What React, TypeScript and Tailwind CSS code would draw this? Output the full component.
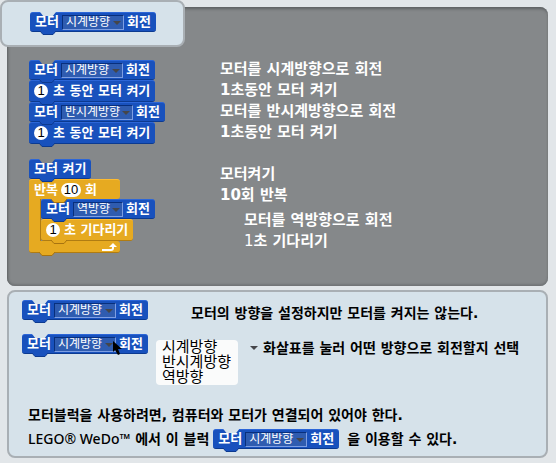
import type { ReactNode } from "react";

const DIRECTIONS = ["시계방향", "반시계방향", "역방향"];

const BLUE = "border-t border-b border-t-[#2c66d8] border-b-[#0c3a90] bg-[#1851bd]";
const ORANGE = "border-t border-b border-t-[#ffbb2e] border-b-[#b07c12] bg-[#e6aa21]";

function Notch({ className }: { className: string }) {
  return (
    <span
      className={`absolute -top-px left-[10px] h-[4px] w-[16px] [clip-path:polygon(0_0,100%_0,80%_100%,20%_100%)] ${className}`}
    />
  );
}

function Tab({ tone, className = "left-[10px]" }: { tone: "blue" | "orange"; className?: string }) {
  const fill = tone === "blue" ? "#1851bd" : "#e6aa21";
  const edge = tone === "blue" ? "#0c3a90" : "#a87410";
  return (
    <svg
      className={`absolute top-full z-10 -mt-px h-[5px] w-[16px] ${className}`}
      viewBox="0 0 16 5"
      aria-hidden="true"
    >
      <path d="M0 0H16V1L13 4.5H3L0 1Z" fill={fill} />
      <path d="M0 1L3 4.5H13L16 1" fill="none" stroke={edge} />
    </svg>
  );
}

type BlockProps = {
  tone?: "blue" | "orange";
  notch?: string;
  tall?: boolean;
  children: ReactNode;
};

function Block({ tone = "blue", notch, tall = false, children }: BlockProps) {
  return (
    <div
      className={`relative flex w-max shrink-0 items-center gap-[3px] rounded-[3px] px-[5px] text-[13px] leading-4 font-bold whitespace-nowrap text-white ${
        tall ? "h-[22px]" : "h-5"
      } ${tone === "blue" ? BLUE : ORANGE}`}
    >
      {notch && <Notch className={notch} />}
      <Tab tone={tone} />
      {children}
    </div>
  );
}

function DirectionSelect({ value, width }: { value: string; width: string }) {
  return (
    <span className="relative flex">
      <select
        aria-label="회전 방향"
        defaultValue={value}
        className={`h-[15px] appearance-none overflow-hidden border border-t-[#082f7c] border-r-[#7d9ee2] border-b-[#7d9ee2] border-l-[#082f7c] bg-[#2f5cb0] pb-px pl-[3px] text-[12px] leading-[12px] font-normal text-white ${width}`}
      >
        {DIRECTIONS.map((d) => (
          <option key={d}>{d}</option>
        ))}
      </select>
      <Arrow className="pointer-events-none absolute top-[6px] right-[3px]" />
    </span>
  );
}

function Arrow({ className = "" }: { className?: string }) {
  return (
    <svg className={`h-1 w-2 ${className}`} viewBox="0 0 8 4" aria-hidden="true">
      <path d="M0 0H8L4 4Z" fill="#45464a" />
    </svg>
  );
}

function NumberField({ value, label, width }: { value: string; label: string; width: string }) {
  return (
    <input
      aria-label={label}
      defaultValue={value}
      className={`relative h-[14px] rounded-full bg-white text-center font-['Liberation_Sans',sans-serif] text-[13px] leading-[14px] font-normal text-black ${width}`}
    />
  );
}

function MotorBlock({ value = "시계방향", width = "w-[62px]", notch }: { value?: string; width?: string; notch?: string }) {
  return (
    <Block notch={notch}>
      <span className="relative">모터</span>
      <DirectionSelect value={value} width={width} />
      <span>회전</span>
    </Block>
  );
}

function TimedBlock() {
  return (
    <Block tall>
      <NumberField value="1" label="초" width="w-[14px]" />
      <span className="pl-[2px]">초 동안 모터 켜기</span>
    </Block>
  );
}

function RepeatBlock() {
  return (
    <div className="flex flex-col items-start">
      <div className="relative flex h-5 w-[91px] items-center gap-[3px] rounded-t-[3px] rounded-br-[3px] border-t border-t-[#ffbb2e] bg-[#e6aa21] px-[5px] text-[13px] leading-4 font-bold text-white">
        <span>반복</span>
        <NumberField value="10" label="반복 횟수" width="w-5" />
        <span className="pl-px">회</span>
        <Tab tone="orange" className="left-[22px]" />
      </div>
      <div className="flex">
        <div className="w-3 border-r border-[#b07c12] bg-[#e6aa21]" />
        <div>
          <MotorBlock value="역방향" width="w-[50px]" />
          <Block tone="orange" tall>
            <NumberField value="1" label="기다릴 초" width="w-[14px]" />
            <span className="pl-px">초 기다리기</span>
          </Block>
        </div>
      </div>
      <div className="relative flex h-3 w-[91px] items-center justify-end rounded-b-[3px] rounded-tr-[3px] border-b border-b-[#b07c12] bg-[#e6aa21] pr-[3px]">
        <svg className="h-[8px] w-[15px]" viewBox="0 0 15 8" aria-hidden="true">
          <path d="M0 7H9Q11 7 11 5V3" fill="none" stroke="#fff" strokeWidth="2" />
          <path d="M7 4L11 0L15 4Z" fill="#fff" />
        </svg>
        <Tab tone="orange" />
      </div>
    </div>
  );
}

export default function App() {
  return (
    <main
      lang="ko"
      className="relative min-h-screen bg-[#e2e6e9] pt-[7px] pr-2 pb-1 pl-[7px] font-['DejaVu_Sans','Noto_Sans_CJK_KR',sans-serif]"
    >
      <header className="absolute top-0 left-0 z-20 h-[47px] w-[185px] rounded-[8px] border-2 border-[#a9afb4] bg-[#d6e2ea] pt-[10px] pl-7">
        <MotorBlock notch="bg-[#d6e2ea]" />
      </header>

      <section className="grid grid-cols-[191px_1fr] rounded-[8px] bg-[#85888a] pt-[53px] pb-[33px] pl-[22px] shadow-[inset_1px_2px_3px_#5d6062,inset_0_-2px_2px_#747779]">
        <div className="flex flex-col items-start">
          <MotorBlock notch="bg-[#85888a]" />
          <TimedBlock />
          <MotorBlock value="반시계방향" width="w-[72px]" />
          <TimedBlock />
          <div className="mt-[15px]">
            <Block notch="bg-[#85888a]">
              <span className="relative">모터 켜기</span>
            </Block>
            <RepeatBlock />
          </div>
        </div>
        <div className="-mt-px text-[15px] leading-[21px] font-bold text-white">
          <p>모터를 시계방향으로 회전</p>
          <p>1초동안 모터 켜기</p>
          <p>모터를 반시계방향으로 회전</p>
          <p>1초동안 모터 켜기</p>
          <p className="mt-[21px]">모터켜기</p>
          <p>10회 반복</p>
          <div className="mt-1 pl-6">
            <p>모터를 역방향으로 회전</p>
            <p>
              <span className="font-normal">1</span>초 기다리기
            </p>
          </div>
        </div>
      </section>

      <section className="mt-1 rounded-[8px] border-2 border-[#a9afb4] bg-[#d6e2ea] px-[13px] pt-2 pb-[7px] text-[14px] leading-5 font-bold text-black">
        <div className="flex">
          <div className="w-[169px]">
            <MotorBlock notch="bg-[#d6e2ea]" />
          </div>
          <p className="mt-[3px] whitespace-nowrap">모터의 방향을 설정하지만 모터를 켜지는 않는다.</p>
        </div>
        <div className="mt-[11px] flex">
          <div className="relative w-[134px]">
            <MotorBlock notch="bg-[#d6e2ea]" />
            <svg className="absolute top-[7px] left-[91px] z-20 h-[14px] w-[9px]" viewBox="0 0 9 14" aria-hidden="true">
              <path d="M0 0V11L2 9L5 14L7 13L5 8H9Z" fill="#000" />
            </svg>
          </div>
          <ul className="mt-[6px] w-[82px] rounded-[4px] bg-[#fafbfb] pl-[6px] text-[15px] leading-[15px] font-normal whitespace-nowrap">
            {DIRECTIONS.map((d) => (
              <li key={d}>{d}</li>
            ))}
          </ul>
          <div className="mt-1 ml-3 flex h-5 items-center gap-[5px] whitespace-nowrap">
            <Arrow />
            <p>화살표를 눌러 어떤 방향으로 회전할지 선택</p>
          </div>
        </div>
        <p className="mt-5 pl-[6px]">모터블럭을 사용하려면, 컴퓨터와 모터가 연결되어 있어야 한다.</p>
        <div className="mt-1 flex items-start pl-[6px] whitespace-nowrap">
          <p>
            <span className="font-['Noto_Sans',sans-serif] font-medium">LEGO® WeDo™</span> 에서 이 블럭
          </p>
          <div className="mr-2 ml-1">
            <MotorBlock notch="bg-[#d6e2ea]" />
          </div>
          <p>을 이용할 수 있다.</p>
        </div>
      </section>
    </main>
  );
}
